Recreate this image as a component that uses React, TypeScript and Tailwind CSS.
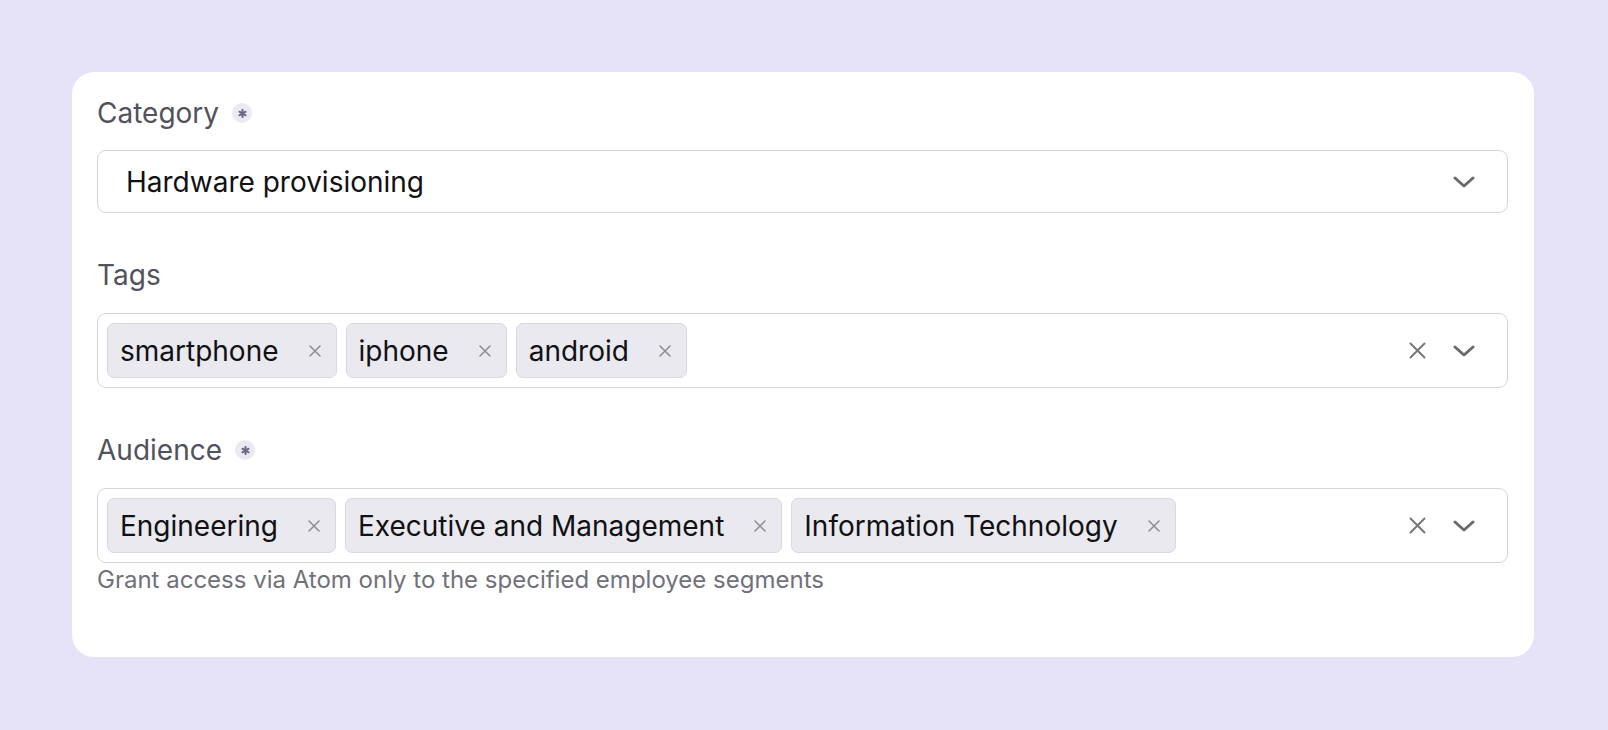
import React from 'react';

const tags = ['smartphone', 'iphone', 'android'];
const audience = ['Engineering', 'Executive and Management', 'Information Technology'];

function RequiredDot() {
  return (
    <span className="ml-[13px] inline-flex h-[20px] w-[20px] items-center justify-center rounded-full bg-[#ebe9f2]">
      <svg width="9" height="9" viewBox="0 0 10 10" fill="none" stroke="#6b6785" strokeWidth="2.2" strokeLinecap="round">
        <path d="M5 1v8" />
        <path d="M1.6 3l6.8 4" />
        <path d="M1.6 7l6.8-4" />
      </svg>
    </span>
  );
}

function Chevron() {
  return (
    <svg width="22" height="12" viewBox="0 0 22 12" fill="none" stroke="#6a6a6e" strokeWidth="3" strokeLinecap="round" strokeLinejoin="round">
      <path d="M2 2l9 8 9-8" />
    </svg>
  );
}

function ClearIcon() {
  return (
    <svg width="17" height="17" viewBox="0 0 17 17" fill="none" stroke="#77777c" strokeWidth="2" strokeLinecap="round">
      <path d="M1.5 1.5l14 14M15.5 1.5l-14 14" />
    </svg>
  );
}

function Chip({ label }: { label: string }) {
  return (
    <div className="flex h-[55px] items-center rounded-[7px] border border-[#d9d9df] bg-[#e9e9ef] pl-[12px] pr-[15px]">
      <span className="text-[28px] leading-none text-[#111114]">{label}</span>
      <svg className="ml-[30px]" width="12" height="12" viewBox="0 0 12 12" fill="none" stroke="#8c8c92" strokeWidth="1.5" strokeLinecap="round">
        <path d="M1 1l10 10M11 1L1 11" />
      </svg>
    </div>
  );
}

function MultiSelect({ items }: { items: string[] }) {
  return (
    <div className="flex h-[75px] items-center rounded-[9px] border border-[#d6d6da] bg-white pl-[9px] pr-[32px]">
      <div className="flex flex-1 items-center gap-[9px]">
        {items.map((t) => (
          <Chip key={t} label={t} />
        ))}
      </div>
      <div className="flex items-center gap-[27px]">
        <ClearIcon />
        <Chevron />
      </div>
    </div>
  );
}

export default function App() {
  return (
    <div className="min-h-screen bg-[#e6e3f9] pt-[72px] pb-[74px]" style={{ fontFamily: 'Inter, "Noto Sans", sans-serif' }}>
      <div className="ml-[72px] w-[1462px] rounded-[22px] bg-white pl-[25px] pr-[26px] pt-[21px] pb-[61px]">
        <div className="mb-[17px] flex items-center text-[28px] leading-10 text-[#52525b]">
          Category
          <RequiredDot />
        </div>
        <div className="flex h-[63px] items-center justify-between rounded-[9px] border border-[#d6d6da] bg-white pl-[28px] pr-[32px]">
          <span className="text-[28px] leading-none text-[#111114]">Hardware provisioning</span>
          <Chevron />
        </div>

        <div className="mt-[42px] mb-[18px] flex items-center text-[28px] leading-10 text-[#52525b]">Tags</div>
        <MultiSelect items={tags} />

        <div className="mt-[42px] mb-[18px] flex items-center text-[28px] leading-10 text-[#52525b]">
          Audience
          <RequiredDot />
        </div>
        <MultiSelect items={audience} />
        <p className="mt-[1px] text-[24px] leading-8 text-[#71717a]">
          Grant access via Atom only to the specified employee segments
        </p>
      </div>
    </div>
  );
}
